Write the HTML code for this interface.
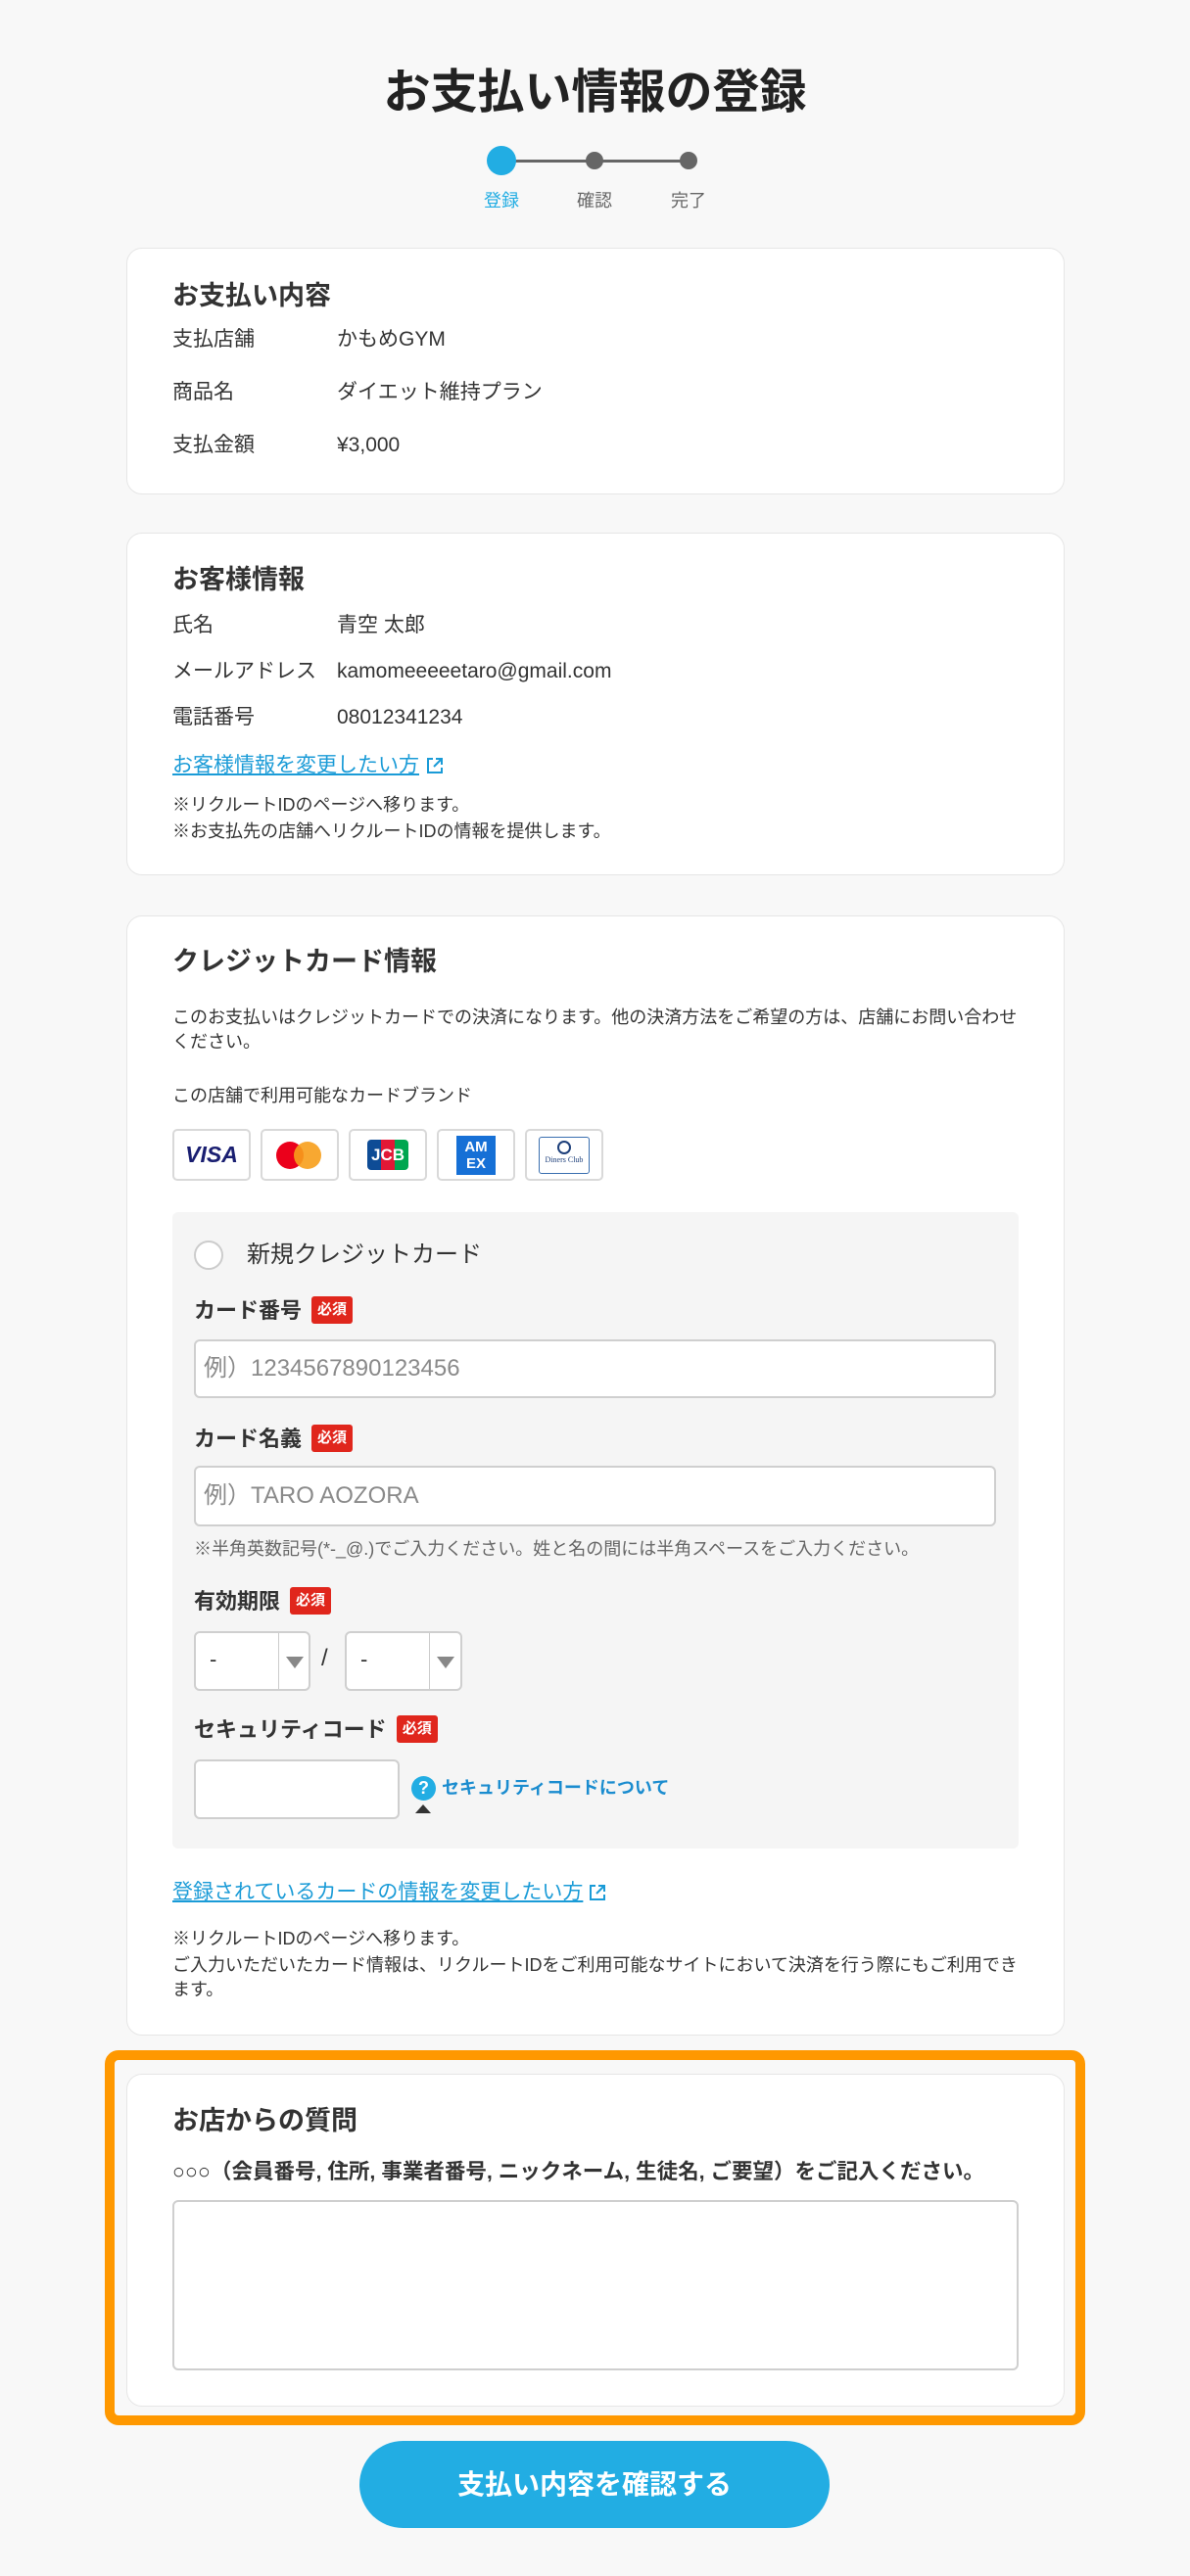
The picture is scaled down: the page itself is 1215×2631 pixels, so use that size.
<!DOCTYPE html>
<html><head><meta charset="utf-8"><style>
*{margin:0;padding:0;box-sizing:border-box}
body{width:1215px;height:2631px;background:#f8f8f8;position:relative;font-family:"Liberation Sans","Noto Sans CJK JP",sans-serif;color:#333;overflow:hidden}
.a{position:absolute;white-space:nowrap}
.card{position:absolute;left:129px;width:958px;background:#fff;border:1px solid #e6e6e6;border-radius:16px}
.h{font-size:27px;font-weight:bold;line-height:40px}
.r{font-size:21px;line-height:30px}
.s{font-size:18px;line-height:26px}
.lk{color:#1a9bd7;text-decoration:underline;font-size:21px;line-height:30px}
.in{position:absolute;background:#fff;border:2px solid #cfcfcf;border-radius:6px}
.ph{color:#8a8a8a;font-size:24px;line-height:30px}
.lb{font-size:22px;font-weight:bold;line-height:32px}
.bd{display:inline-block;background:#e0261c;color:#fff;font-size:15px;font-weight:bold;line-height:28px;padding:0 6px;border-radius:3px;vertical-align:middle;margin-left:10px;position:relative;top:-2px}
.logo{position:absolute;top:1153px;width:80px;height:53px;border:2px solid #d9d9d9;border-radius:5px;background:#fff}
</style></head><body>
<div class="a" style="left:0;width:1215px;text-align:center;top:65px;font-size:48px;font-weight:bold;line-height:60px;color:#222">お支払い情報の登録</div>
<div class="a" style="left:512px;top:163px;width:191px;height:3px;background:#666"></div>
<div class="a" style="left:497px;top:149px;width:30px;height:30px;border-radius:50%;background:#22ade3"></div>
<div class="a" style="left:598px;top:155px;width:18px;height:18px;border-radius:50%;background:#666"></div>
<div class="a" style="left:694px;top:155px;width:18px;height:18px;border-radius:50%;background:#666"></div>
<div class="a" style="left:482px;width:60px;text-align:center;top:193px;font-size:18px;line-height:24px;color:#22ade3">登録</div>
<div class="a" style="left:577px;width:60px;text-align:center;top:193px;font-size:18px;line-height:24px;color:#666">確認</div>
<div class="a" style="left:673px;width:60px;text-align:center;top:193px;font-size:18px;line-height:24px;color:#666">完了</div>

<div class="card" style="top:253px;height:252px"></div>
<div class="a h" style="left:176px;top:282px">お支払い内容</div>
<div class="a r" style="left:176px;top:332px">支払店舗</div><div class="a r" style="left:344px;top:332px">かもめGYM</div>
<div class="a r" style="left:176px;top:386px">商品名</div><div class="a r" style="left:344px;top:386px">ダイエット維持プラン</div>
<div class="a r" style="left:176px;top:440px">支払金額</div><div class="a r" style="left:344px;top:440px">¥3,000</div>

<div class="card" style="top:544px;height:350px"></div>
<div class="a h" style="left:176px;top:572px">お客様情報</div>
<div class="a r" style="left:176px;top:624px">氏名</div><div class="a r" style="left:344px;top:624px">青空 太郎</div>
<div class="a r" style="left:176px;top:671px">メールアドレス</div><div class="a r" style="left:344px;top:671px">kamomeeeeetaro@gmail.com</div>
<div class="a r" style="left:176px;top:718px">電話番号</div><div class="a r" style="left:344px;top:718px">08012341234</div>
<div class="a lk" style="left:176px;top:767px">お客様情報を変更したい方</div>
<svg class="a" style="left:434px;top:772px" width="20" height="20" viewBox="0 0 20 20" fill="none" stroke="#1a9bd7" stroke-width="2"><path d="M8 3H3v14h14v-5M11 3h6v6M17 3l-8 8"/></svg>
<div class="a s" style="left:176px;top:809px">※リクルートIDのページへ移ります。</div>
<div class="a s" style="left:176px;top:836px">※お支払先の店舗へリクルートIDの情報を提供します。</div>

<div class="card" style="top:935px;height:1144px"></div>
<div class="a h" style="left:176px;top:962px">クレジットカード情報</div>
<div class="a s" style="left:176px;top:1026px">このお支払いはクレジットカードでの決済になります。他の決済方法をご希望の方は、店舗にお問い合わせ</div>
<div class="a s" style="left:176px;top:1051px">ください。</div>
<div class="a s" style="left:176px;top:1106px">この店舗で利用可能なカードブランド</div>
<div class="logo" style="left:176px"><div style="text-align:center;font:italic 900 23px/49px 'Liberation Sans',sans-serif;color:#1a1f71">VISA</div></div>
<div class="logo" style="left:266px"><div style="position:absolute;left:14px;top:11px;width:28px;height:28px;border-radius:50%;background:#eb001b"></div><div style="position:absolute;left:32px;top:11px;width:28px;height:28px;border-radius:50%;background:#f79e1b;opacity:.9"></div></div>
<div class="logo" style="left:356px"><div style="position:absolute;left:17px;top:9px;width:14px;height:31px;background:#0e4c96;border-radius:4px 0 0 4px"></div><div style="position:absolute;left:31px;top:9px;width:14px;height:31px;background:#e21836"></div><div style="position:absolute;left:45px;top:9px;width:14px;height:31px;background:#00a650;border-radius:0 4px 4px 0"></div><div style="position:absolute;left:17px;top:9px;width:42px;text-align:center;color:#fff;font:bold 17px/31px 'Liberation Sans',sans-serif">JCB</div></div>
<div class="logo" style="left:446px"><div style="position:absolute;left:18px;top:5px;width:40px;height:40px;background:#1670d6;color:#fff;font:bold 15px/17px 'Liberation Sans',sans-serif;text-align:center;padding-top:3px">AM<br>EX</div></div>
<div class="logo" style="left:536px"><div style="position:absolute;left:12px;top:6px;width:52px;height:38px;border:1px solid #3a6fb0;border-radius:3px;text-align:center;font:8px/10px 'Liberation Serif',serif;color:#1d3f7a"><div style="width:14px;height:14px;border:2px solid #1d3f7a;border-radius:50%;margin:3px auto 1px"></div>Diners Club</div></div>

<div class="a" style="left:176px;top:1238px;width:864px;height:650px;background:#f5f5f5;border-radius:6px"></div>
<div class="a" style="left:198px;top:1267px;width:30px;height:30px;border-radius:50%;background:#fff;border:2px solid #ccc"></div>
<div class="a" style="left:252px;top:1265px;font-size:24px;line-height:34px">新規クレジットカード</div>
<div class="a lb" style="left:198px;top:1323px">カード番号<span class="bd">必須</span></div>
<div class="in" style="left:198px;top:1368px;width:819px;height:60px"></div>
<div class="a ph" style="left:208px;top:1383px">例）1234567890123456</div>
<div class="a lb" style="left:198px;top:1454px">カード名義<span class="bd">必須</span></div>
<div class="in" style="left:198px;top:1497px;width:819px;height:62px"></div>
<div class="a ph" style="left:208px;top:1513px">例）TARO AOZORA</div>
<div class="a s" style="left:198px;top:1569px;color:#666">※半角英数記号(*-_@.)でご入力ください。姓と名の間には半角スペースをご入力ください。</div>
<div class="a lb" style="left:198px;top:1620px">有効期限<span class="bd">必須</span></div>
<div class="in" style="left:198px;top:1666px;width:119px;height:61px"><div style="position:absolute;left:84px;top:0;bottom:0;border-left:1px solid #ccc"></div><div class="a" style="left:14px;top:14px;font-size:22px">-</div><div class="a" style="left:92px;top:24px;border-left:9px solid transparent;border-right:9px solid transparent;border-top:12px solid #888"></div></div>
<div class="a" style="left:328px;top:1680px;font-size:24px">/</div>
<div class="in" style="left:352px;top:1666px;width:120px;height:61px"><div style="position:absolute;left:84px;top:0;bottom:0;border-left:1px solid #ccc"></div><div class="a" style="left:14px;top:14px;font-size:22px">-</div><div class="a" style="left:92px;top:24px;border-left:9px solid transparent;border-right:9px solid transparent;border-top:12px solid #888"></div></div>
<div class="a lb" style="left:198px;top:1751px">セキュリティコード<span class="bd">必須</span></div>
<div class="in" style="left:198px;top:1797px;width:210px;height:61px"></div>
<div class="a" style="left:420px;top:1814px;width:25px;height:25px;border-radius:50%;background:#22ade3;color:#fff;font:bold 18px/25px 'Liberation Sans',sans-serif;text-align:center">?</div>
<div class="a" style="left:424px;top:1843px;border-left:8px solid transparent;border-right:8px solid transparent;border-bottom:9px solid #333"></div>
<div class="a" style="left:451px;top:1813px;font-size:18px;font-weight:bold;line-height:26px;color:#1a8ccf">セキュリティコードについて</div>
<div class="a lk" style="left:176px;top:1918px">登録されているカードの情報を変更したい方</div>
<svg class="a" style="left:600px;top:1923px" width="20" height="20" viewBox="0 0 20 20" fill="none" stroke="#1a9bd7" stroke-width="2"><path d="M8 3H3v14h14v-5M11 3h6v6M17 3l-8 8"/></svg>
<div class="a s" style="left:176px;top:1967px">※リクルートIDのページへ移ります。</div>
<div class="a s" style="left:176px;top:1994px">ご入力いただいたカード情報は、リクルートIDをご利用可能なサイトにおいて決済を行う際にもご利用でき</div>
<div class="a s" style="left:176px;top:2019px">ます。</div>

<div class="a" style="left:107px;top:2094px;width:1001px;height:383px;border:10px solid #ff9800;border-radius:14px"></div>
<div class="card" style="top:2118px;height:340px"></div>
<div class="a h" style="left:176px;top:2146px">お店からの質問</div>
<div class="a" style="left:176px;top:2203px;font-size:21.5px;font-weight:bold;line-height:30px">○○○（会員番号, 住所, 事業者番号, ニックネーム, 生徒名, ご要望）をご記入ください。</div>
<div class="in" style="left:176px;top:2247px;width:864px;height:174px"></div>

<div class="a" style="left:367px;top:2493px;width:480px;height:89px;border-radius:45px;background:#22ade3;color:#fff;text-align:center;font-size:28px;font-weight:bold;line-height:89px">支払い内容を確認する</div>
</body></html>
